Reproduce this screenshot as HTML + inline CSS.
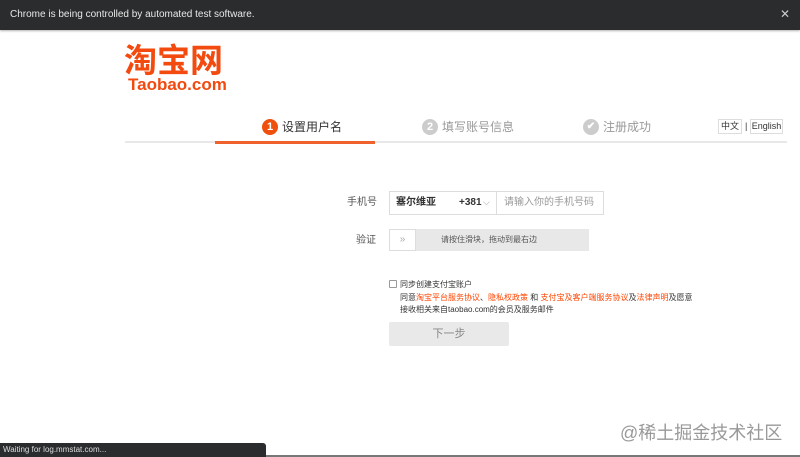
<!DOCTYPE html>
<html><head><meta charset="utf-8"><style>
*{margin:0;padding:0;box-sizing:border-box}
body{width:800px;height:457px;overflow:hidden;background:#fff;font-family:"Liberation Sans","Noto Sans CJK SC",sans-serif;position:relative;color:#333}
.a{position:absolute;white-space:nowrap}
</style></head><body>
<div class="a" style="left:0;top:0;width:800px;height:30px;background:#2b2c2e;box-shadow:0 1px 2px rgba(0,0,0,.3)"></div>
<div class="a" style="left:10px;top:9px;color:#e8e8e8;font-size:10px">Chrome is being controlled by automated test software.</div>
<div class="a" style="left:780px;top:7px;color:#ccc;font-size:12px">✕</div>

<div class="a" style="left:124px;top:43px;color:#f24a0f;font-size:33px;font-weight:bold;letter-spacing:0px;line-height:36px">淘宝网</div>
<div class="a" style="left:128px;top:76px;color:#f24a0f;font-size:17px;font-weight:bold;line-height:18px">Taobao.com</div>

<div class="a" style="left:125px;top:141px;width:662px;height:2px;background:#e8e8e8"></div>
<div class="a" style="left:215px;top:141px;width:160px;height:3px;background:#f0622d"></div>

<div class="a" style="left:262px;top:119px;width:16px;height:16px;border-radius:50%;background:#f0500e;color:#fff;font-size:11px;font-weight:bold;text-align:center;line-height:16px">1</div>
<div class="a" style="left:282px;top:118px;font-size:12px;color:#333;line-height:18px">设置用户名</div>
<div class="a" style="left:422px;top:119px;width:16px;height:16px;border-radius:50%;background:#ccc;color:#fff;font-size:11px;font-weight:bold;text-align:center;line-height:16px">2</div>
<div class="a" style="left:442px;top:118px;font-size:12px;color:#999;line-height:18px">填写账号信息</div>
<div class="a" style="left:583px;top:119px;width:16px;height:16px;border-radius:50%;background:#ccc;color:#fff;font-size:10px;font-weight:bold;text-align:center;line-height:16px">✔</div>
<div class="a" style="left:603px;top:118px;font-size:12px;color:#999;line-height:18px">注册成功</div>

<div class="a" style="left:718px;top:119px;width:24px;height:15px;border:1px solid #ddd;font-size:9px;text-align:center;line-height:13px">中文</div>
<div class="a" style="left:745px;top:120px;font-size:9px;line-height:13px">|</div>
<div class="a" style="left:750px;top:119px;width:33px;height:15px;border:1px solid #ddd;font-size:9px;text-align:center;line-height:13px">English</div>

<div class="a" style="left:347px;top:196px;font-size:10px;color:#555;line-height:14px">手机号</div>
<div class="a" style="left:389px;top:191px;width:108px;height:24px;border:1px solid #ddd"></div>
<div class="a" style="left:396px;top:197px;font-size:10px;font-weight:bold;color:#333;line-height:12px">塞尔维亚</div>
<div class="a" style="left:459px;top:197px;font-size:10px;font-weight:bold;color:#333;line-height:12px">+381</div>
<div class="a" style="left:483px;top:196px;font-size:9px;color:#999;line-height:12px">⌵</div>
<div class="a" style="left:497px;top:191px;width:107px;height:24px;border:1px solid #ddd;border-left:none"></div>
<div class="a" style="left:504px;top:197px;font-size:10px;color:#999;line-height:12px">请输入你的手机号码</div>

<div class="a" style="left:356px;top:234px;font-size:10px;color:#555;line-height:14px">验证</div>
<div class="a" style="left:389px;top:229px;width:200px;height:22px;background:#e8e8e8"></div>
<div class="a" style="left:389px;top:229px;width:27px;height:22px;background:#fff;border:1px solid #ddd;color:#aaa;font-size:10px;text-align:center;line-height:19px">»</div>
<div class="a" style="left:441px;top:234px;font-size:8px;color:#555;line-height:12px">请按住滑块，拖动到最右边</div>

<div class="a" style="left:389px;top:280px;width:8px;height:8px;border:1px solid #999;border-radius:1px"></div>
<div class="a" style="left:400px;top:279px;font-size:8px;color:#333;line-height:11px">同步创建支付宝账户</div>
<div class="a" style="left:400px;top:292px;font-size:8px;color:#333;line-height:11px">同意<span style="color:#f40">淘宝平台服务协议</span>、<span style="color:#f40">隐私权政策</span> 和 <span style="color:#f40">支付宝及客户端服务协议</span>及<span style="color:#f40">法律声明</span>及愿意</div>
<div class="a" style="left:400px;top:304px;font-size:8px;color:#333;line-height:11px">接收相关来自taobao.com的会员及服务邮件</div>

<div class="a" style="left:389px;top:322px;width:120px;height:24px;background:#e9e9e9;border-radius:2px;color:#888;font-size:11px;text-align:center;line-height:24px">下一步</div>

<div class="a" style="left:620px;top:422px;font-size:18px;color:#999;line-height:22px">@稀土掘金技术社区</div>
<div class="a" style="left:0;top:443px;width:266px;height:14px;background:#2b2c2e;border-top-right-radius:3px"></div>
<div class="a" style="left:3px;top:445px;font-size:8px;color:#ddd;line-height:10px">Waiting for log.mmstat.com...</div>
<div class="a" style="left:266px;top:455px;width:534px;height:2px;background:#777"></div>
</body></html>
